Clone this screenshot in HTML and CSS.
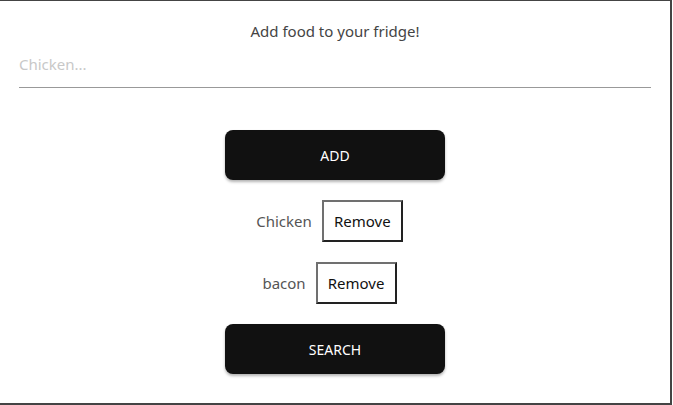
FILE: index.html
```html
<!DOCTYPE html>
<html>
<head>
<meta charset="utf-8">
<link rel="stylesheet" href="styles.css">
</head>
<body>
<div class="frame">
  <h1 class="title">Add food to your fridge!</h1>
  <div class="field">
    <input class="food-input" type="text" placeholder="Chicken...">
  </div>
  <div class="actions">
    <button class="primary">ADD</button>
    <div class="item"><span class="item-name">Chicken</span><button class="remove">Remove</button></div>
    <div class="item"><span class="item-name">bacon</span><button class="remove">Remove</button></div>
    <button class="primary">SEARCH</button>
  </div>
</div>
</body>
</html>
```

FILE: styles.css
```css
html, body {
  margin: 0;
  padding: 0;
  background: #fff;
}
body {
  font-family: "Noto Sans", "Open Sans", sans-serif;
}
.frame {
  box-sizing: border-box;
  width: 672px;
  height: 405px;
  border-top: 1px solid #444;
  border-right: 2px solid #444;
  border-bottom: 2px solid #444;
  padding: 0 19px 0 19px;
}
.title {
  margin: 20px 0 0 0;
  font-size: 15px;
  font-weight: 400;
  line-height: 20px;
  color: #444;
  text-align: center;
}
.field {
  margin-top: 11px;
}
.food-input {
  box-sizing: border-box;
  width: 100%;
  height: 36px;
  border: none;
  border-bottom: 1px solid #999;
  padding: 0 0 12px 0;
  font-family: inherit;
  font-size: 15px;
  color: #333;
  outline: none;
  background: transparent;
}
.food-input::placeholder {
  color: #c8c8c8;
}
.actions {
  margin-top: 42px;
  display: flex;
  flex-direction: column;
  align-items: center;
  gap: 20px;
}
.primary {
  width: 220px;
  height: 50px;
  border: none;
  border-radius: 8px;
  background: #111;
  color: #fff;
  font-family: inherit;
  font-size: 14px;
  box-shadow: 0 2px 3px rgba(0,0,0,0.3);
}
.item {
  display: flex;
  align-items: center;
  gap: 10px;
  height: 42px;
  padding-right: 11px;
}
.item-name {
  font-size: 15px;
  color: #555;
}
.remove {
  box-sizing: border-box;
  width: 81px;
  height: 42px;
  background: #fff;
  border: 2px solid;
  border-color: #707070 #222 #222 #707070;
  font-family: inherit;
  font-size: 15px;
  color: #111;
  padding: 0;
}
```
